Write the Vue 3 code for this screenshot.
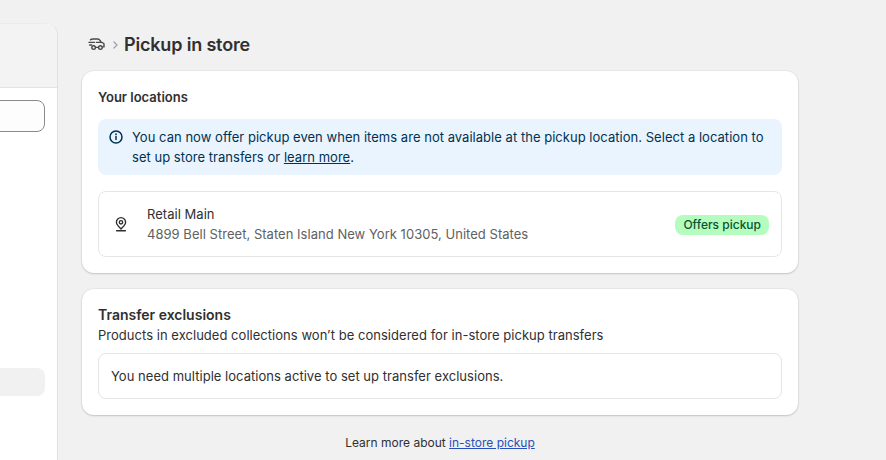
<script setup>
const infoLink = 'learn more'
</script>

<template>
  <div class="page">
    <aside class="side">
      <div class="side-head"></div>
      <div class="side-body">
        <div class="side-input"></div>
        <div class="side-row"></div>
      </div>
    </aside>
    <main class="main">
      <header class="crumbs">
        <svg class="truck" width="20" height="20" viewBox="0 0 20 20" fill="none" stroke="#4a4a4a" stroke-width="1.4" stroke-linecap="round" stroke-linejoin="round">
          <path d="M3.500 5.800C4 5.200 5 5 6 5h4.800c1 0 1.700.5 2.200 1.300l1 1.900 1.900.6c.7.2 1.100.8 1.100 1.500v2.600h-1.200" />
          <path d="M9.500 8.400H14" />
          <path d="M2 8.400h5.500M2.600 11h2.200" />
          <path d="M8.600 13.400h2.800" />
          <circle cx="6.600" cy="13.600" r="1.800" />
          <circle cx="13.400" cy="13.600" r="1.800" />
        </svg>
        <svg class="chev" width="8" height="12" viewBox="0 0 8 12" fill="none" stroke="#a0a0a0" stroke-width="1.3" stroke-linecap="round" stroke-linejoin="round"><path d="M2 3 5 6 2 9" /></svg>
        <h1>Pickup in store</h1>
      </header>

      <section class="card first">
        <h2>Your locations</h2>
        <div class="banner">
          <svg class="info" width="16" height="16" viewBox="0 0 16 16" fill="none" stroke="#00324f" stroke-width="1.5" stroke-linecap="round">
            <circle cx="8" cy="8" r="6" />
            <path d="M8 7.400v3.200" />
            <path d="M8 5.200v.1" stroke-width="1.800" />
          </svg>
          <p>You can now offer pickup even when items are not available at the pickup location. Select a location to set up store transfers or <a href="#">{{ infoLink }}</a>.</p>
        </div>
        <div class="loc">
          <svg class="pin" width="20" height="20" viewBox="0 0 20 20" fill="none" stroke="#303030" stroke-width="1.4" stroke-linecap="round" stroke-linejoin="round">
            <path d="M10 15 6.900 11.600A4.700 4.700 0 0 1 5.400 8.200C5.400 5.700 7.500 3.600 10 3.600s4.600 2.100 4.600 4.600c0 1.300-.6 2.500-1.500 3.400z" />
            <circle cx="10" cy="8.300" r="1.700" />
            <path d="M5.600 16.800h8.800" />
          </svg>
          <div class="loc-text">
            <div class="loc-name">Retail Main</div>
            <div class="loc-addr">4899 Bell Street, Staten Island New York 10305, United States</div>
          </div>
          <span class="badge">Offers pickup</span>
        </div>
      </section>

      <section class="card second">
        <h2 class="big">Transfer exclusions</h2>
        <p class="sub">Products in excluded collections won’t be considered for in-store pickup transfers</p>
        <div class="note">You need multiple locations active to set up transfer exclusions.</div>
      </section>

      <footer class="foot">Learn more about <a href="#">in-store pickup</a></footer>
    </main>
  </div>
</template>

<style>
html, body { margin: 0; background: #f1f1f1; }
</style>

<style scoped>
.page {
  display: flex;
  height: 460px;
  overflow: hidden;
  background: #f1f1f1;
  font-family: Inter, "Liberation Sans", sans-serif;
  font-size: 13px;
  line-height: 20px;
  letter-spacing: 0.03px;
  color: #303030;
}
.side {
  flex: 0 0 57px;
  margin-top: 23px;
  box-sizing: content-box;
  border-right: 1px solid #e1e1e1;
  border-top: 1px solid #ebebeb;
  border-top-right-radius: 12px;
  background: #fff;
  overflow: hidden;
  display: flex;
  flex-direction: column;
}
.side-head {
  height: 63px;
  flex: none;
  background: #f3f3f3;
  border-bottom: 1px solid #e3e3e3;
}
.side-body { padding: 12px 12px 0 0; }
.side-input {
  margin-left: -20px;
  height: 30px;
  border: 1px solid #8a8a8a;
  border-radius: 8px;
  background: #fdfdfd;
}
.side-row {
  margin-top: 236px;
  margin-left: -20px;
  height: 28px;
  border-radius: 8px;
  background: #f1f1f1;
}
.main {
  margin-left: 24px;
  width: 716px;
  flex: none;
}
.crumbs {
  height: 71px;
  box-sizing: border-box;
  padding: 32px 0 0 5px;
  display: flex;
  align-items: flex-start;
}
.truck { margin-top: 2px; }
.chev { margin: 7px 0 0 5px; }
h1 {
  margin: 0 0 0 4px;
  font-size: 18px;
  line-height: 26px;
  font-weight: 600;
  letter-spacing: -0.17px;
}
.card {
  background: #fff;
  border-radius: 12px;
  box-shadow: 0 1px 2px rgba(0, 0, 0, 0.16), 0 0 0 1px rgba(0, 0, 0, 0.035);
  padding: 16px;
}
.second { margin-top: 16px; }
h2 {
  margin: 0;
  font-size: 13px;
  line-height: 20px;
  font-weight: 600;
  letter-spacing: 0;
}
h2.big { font-size: 14px; }
.first h2 { margin-bottom: 12px; }
.banner {
  display: flex;
  gap: 8px;
  background: #eaf4ff;
  border-radius: 8px;
  padding: 8px 8px 8px 10px;
  color: #00324f;
  margin-bottom: 16px;
}
.info { flex: none; margin-top: 2px; }
.banner p { margin: 0; }
.banner a { color: #00324f; text-decoration: underline; }
.loc {
  display: flex;
  align-items: center;
  border: 1px solid #e6e6e6;
  border-radius: 8px;
  padding: 12px;
}
.pin { flex: none; margin-right: 16px; }
.loc-text { flex: 1; }
.loc-addr { color: #616161; }
.badge {
  background: #b4fdbe;
  color: #0c5132;
  font-size: 12px;
  line-height: 20px;
  font-weight: 550;
  padding: 0 8px;
  border-radius: 8px;
  margin-top: 2px;
  letter-spacing: 0;
}
.sub { margin: 0 0 8px; }
.note {
  border: 1px solid #e6e6e6;
  border-radius: 8px;
  padding: 12px;
}
.foot {
  margin-top: 18px;
  text-align: center;
  font-size: 12px;
  line-height: 20px;
  letter-spacing: 0;
}
.foot a { color: #2a4fb8; text-decoration: underline; }
</style>
